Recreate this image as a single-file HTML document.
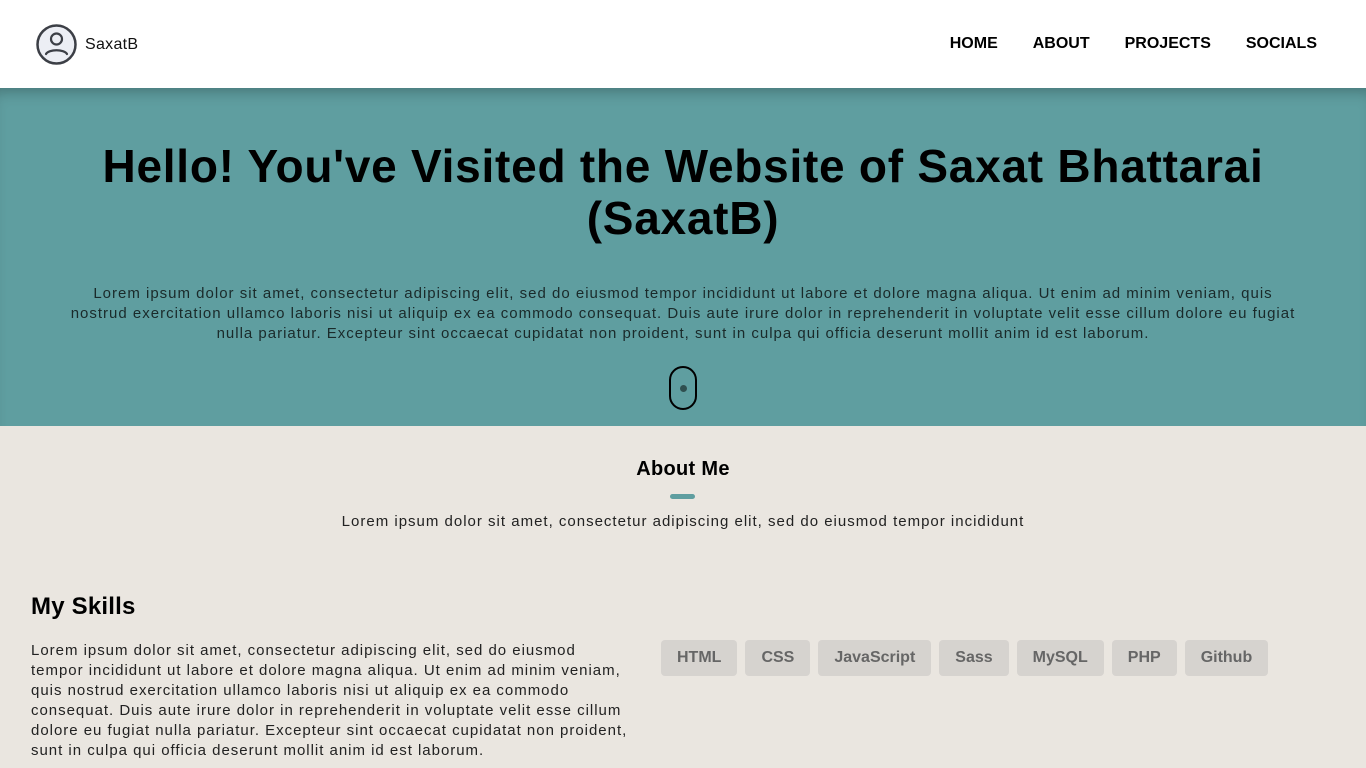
<!DOCTYPE html>
<html><head><style>
*{margin:0;padding:0;box-sizing:border-box}
body{width:1366px;height:768px;overflow:hidden;background:#eae6e0;font-family:"Liberation Sans",sans-serif;color:#000}
header{height:88px;background:#fff;position:relative}
.logo{position:absolute;left:36px;top:24px;display:flex;align-items:center}
.logo span{font-size:16px;margin-left:8px;color:#111;letter-spacing:.3px}
nav{position:absolute;right:49px;top:35px;display:flex;gap:35px;font-weight:bold;font-size:16px}
.hero{height:338px;background:#5f9ea0;position:relative;text-align:center;box-shadow:inset 0 12px 14px -8px rgba(0,0,0,.25)}
.hero h1{position:absolute;top:52px;left:0;right:0;font-size:46px;line-height:52px;font-weight:bold;letter-spacing:.75px}
.hero p{position:absolute;top:196px;left:70px;right:70px;font-size:15px;line-height:20px;color:#1a2a2a;letter-spacing:1px}
.mouse{position:absolute;left:669px;top:278px;width:28px;height:44px;border:2px solid #000;border-radius:14px}
.mouse i{position:absolute;left:9px;top:17px;width:7px;height:7px;border-radius:50%;background:#2f4f4f}
.about{text-align:center}
.about h2{position:absolute;top:458px;left:0;right:0;font-size:20px;letter-spacing:.3px}
.bar{position:absolute;left:670px;top:494px;width:25px;height:5px;border-radius:3px;background:#5f9ea0}
.about p{position:absolute;top:513px;left:0;right:0;font-size:15px;color:#222;letter-spacing:1px}
.sk h3{position:absolute;left:31px;top:593px;font-size:24px;letter-spacing:.2px}
.sk p{position:absolute;left:31px;top:641px;width:640px;white-space:nowrap;font-size:15px;line-height:20px;color:#222;letter-spacing:.98px}
.tags{position:absolute;left:661px;top:640px;display:flex;gap:8px}
.tags span{background:#d6d3cf;color:#666;font-weight:bold;font-size:16px;padding:0 16px;height:36px;line-height:36px;border-radius:4px}
</style></head><body>
<header>
<div class="logo"><svg width="41" height="41" viewBox="0 0 41 41"><circle cx="20.5" cy="20.5" r="19" fill="#eceef4" stroke="#3c3f46" stroke-width="2.5"/><circle cx="20.5" cy="15" r="5.5" fill="none" stroke="#3c3f46" stroke-width="2.2"/><path d="M10 30c3-5 18-5 21 0" fill="none" stroke="#3c3f46" stroke-width="2.2" stroke-linecap="round"/></svg><span>SaxatB</span></div>
<nav><span>HOME</span><span>ABOUT</span><span>PROJECTS</span><span>SOCIALS</span></nav>
</header>
<div class="hero">
<h1>Hello! You've Visited the Website of Saxat Bhattarai<br>(SaxatB)</h1>
<p>Lorem ipsum dolor sit amet, consectetur adipiscing elit, sed do eiusmod tempor incididunt ut labore et dolore magna aliqua. Ut enim ad minim veniam, quis nostrud exercitation ullamco laboris nisi ut aliquip ex ea commodo consequat. Duis aute irure dolor in reprehenderit in voluptate velit esse cillum dolore eu fugiat nulla pariatur. Excepteur sint occaecat cupidatat non proident, sunt in culpa qui officia deserunt mollit anim id est laborum.</p>
<div class="mouse"><i></i></div>
</div>
<div class="about"><h2>About Me</h2><div class="bar"></div><p>Lorem ipsum dolor sit amet, consectetur adipiscing elit, sed do eiusmod tempor incididunt</p></div>
<div class="sk"><h3>My Skills</h3>
<p>Lorem ipsum dolor sit amet, consectetur adipiscing elit, sed do eiusmod<br>tempor incididunt ut labore et dolore magna aliqua. Ut enim ad minim veniam,<br>quis nostrud exercitation ullamco laboris nisi ut aliquip ex ea commodo<br>consequat. Duis aute irure dolor in reprehenderit in voluptate velit esse cillum<br>dolore eu fugiat nulla pariatur. Excepteur sint occaecat cupidatat non proident,<br>sunt in culpa qui officia deserunt mollit anim id est laborum.</p>
<div class="tags"><span>HTML</span><span>CSS</span><span>JavaScript</span><span>Sass</span><span>MySQL</span><span>PHP</span><span>Github</span></div>
</div>
</body></html>
